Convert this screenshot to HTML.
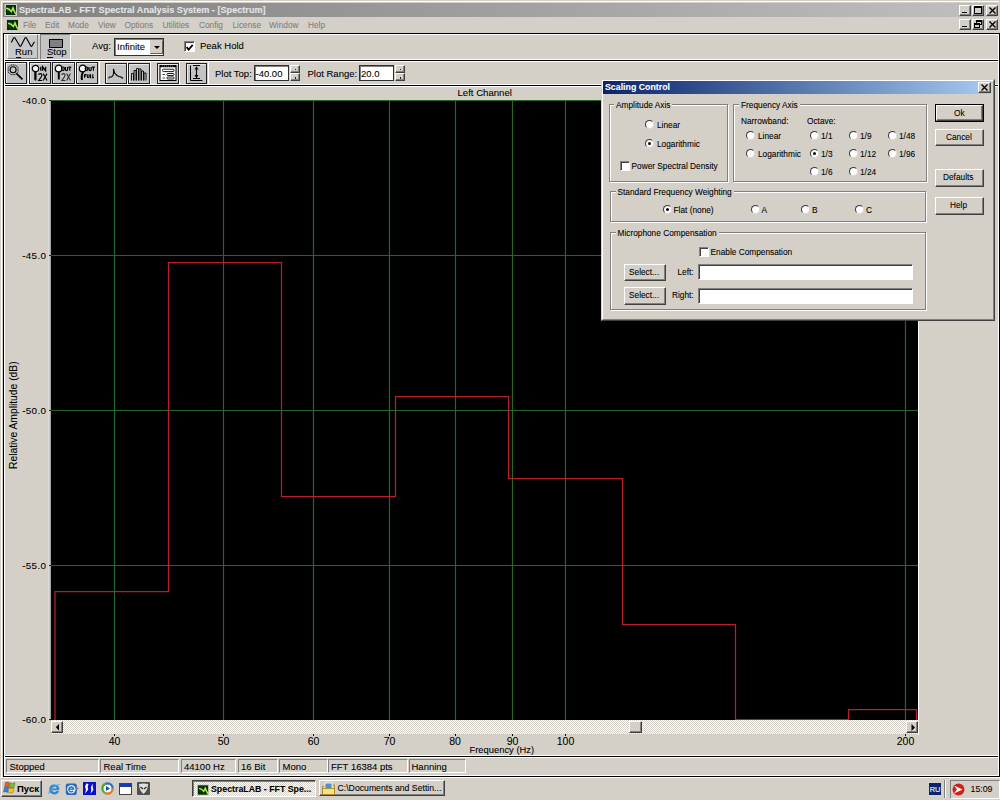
<!DOCTYPE html>
<html><head><meta charset="utf-8"><style>
*{box-sizing:border-box}
body{margin:0;width:1000px;height:800px;overflow:hidden;background:#D4D0C8;position:relative;font-family:"Liberation Sans",sans-serif;font-size:9px;color:#000}
.a{position:absolute}
.t{position:absolute;white-space:pre;line-height:1;-webkit-text-stroke:0.08px currentColor}
.glab{-webkit-text-stroke:0.08px #000}
.hl{position:absolute;background:#000}
.btn{position:absolute;background:#D4D0C8;border:1px solid;border-color:#fff #404040 #404040 #fff;box-shadow:inset -1px -1px 0 #808080}
.sunk{position:absolute;background:#fff;border:1px solid;border-color:#808080 #fff #fff #808080;box-shadow:inset 1px 1px 0 #404040}
.tb{position:absolute;background:#C4C4C4;border:1px solid #202020;box-shadow:inset 1px 1px 0 #e8e8e8}
.cap{position:absolute;width:12px;height:11px;background:#D4D0C8;border:1px solid;border-color:#fff #404040 #404040 #fff;box-shadow:inset -1px -1px 0 #808080}
.rad{position:absolute;width:9px;height:9px;border-radius:50%;background:#fff;border:1.2px solid;border-color:#383838 #d8d8d8 #d8d8d8 #383838;transform:rotate(0deg)}
.rad.on::after{content:"";position:absolute;left:1.8px;top:1.8px;width:3.4px;height:3.4px;border-radius:50%;background:#000}
.chk{position:absolute;width:10px;height:10px;background:#fff;border:1px solid;border-color:#808080 #fff #fff #808080;box-shadow:inset 1px 1px 0 #404040}
.grp{position:absolute;border:1px solid #808080;box-shadow:1px 1px 0 #fff, inset 1px 1px 0 #fff}
.glab{position:absolute;background:#D4D0C8;padding:0 2px;white-space:pre;line-height:1;font-size:8.3px;transform:scaleY(1.15);transform-origin:0 7px}

.mn{top:21px;font-size:8.3px;color:#808080}
.tb.dn{border-color:#404040 #fff #fff #404040;box-shadow:inset 1px 1px 0 #808080}
.yl{left:20px;font-size:9.9px;width:26.4px;text-align:right;letter-spacing:0.35px}
.xl{top:736px;font-size:10.5px;transform:translateX(-50%)}
.sp{position:absolute;top:759px;height:14px;border:1px solid;border-color:#808080 #fff #fff #808080}
.st{top:762px;font-size:9.5px}
.dt{font-size:8.3px;transform:scaleY(1.15);transform-origin:0 7px}
</style></head><body>

<!-- ============ MAIN FRAME ============ -->
<div class="a" style="left:1px;top:1px;width:998px;height:1px;background:#fff"></div>
<div class="a" style="left:1px;top:1px;width:1px;height:776px;background:#fff"></div>
<div class="a" style="left:3px;top:3px;width:994px;height:14px;background:linear-gradient(90deg,#808080,#C0C0C0)"></div>
<svg class="a" style="left:4px;top:4px" width="13" height="12" viewBox="0 0 13 12">
  <rect x="0.5" y="0" width="12.5" height="12" fill="#C8D0C8"/>
  <rect x="2" y="1" width="10" height="10" fill="#032a06"/>
  <path d="M1 4H12M1 7H12M4 1V11M8 1V11" stroke="#0a5a10" stroke-width="0.6"/>
  <path d="M2.2 4.3L5 5.2L7.3 7.5L9 4L9.8 6.2L12 10.5" stroke="#b8e848" stroke-width="1.5" fill="none"/><path d="M8 5.5L9.2 3.5L10.2 7Z" fill="#b8e848"/>
</svg>
<div class="t" style="left:19px;top:6px;font-size:9.15px;font-weight:bold;color:#E6E6E6">SpectraLAB - FFT Spectral Analysis System - [Spectrum]</div>
<div class="cap" style="left:959px;top:5px"><div class="a" style="left:2px;top:5.5px;width:5px;height:1.5px;background:#000"></div></div>
<div class="cap" style="left:972px;top:5px"><div class="a" style="left:1px;top:0px;width:8px;height:7.5px;border:1px solid #000;border-top-width:2px"></div></div>
<div class="cap" style="left:986px;top:5px"><svg class="a" style="left:2px;top:1px" width="7" height="7"><path d="M0.5 0.5L6.5 6.5M6.5 0.5L0.5 6.5" stroke="#000" stroke-width="1.4"/></svg></div>

<!-- menu bar -->
<svg class="a" style="left:6px;top:19px" width="13" height="12" viewBox="0 0 13 12">
  <rect x="0" y="0" width="13" height="12" fill="#C8C8C0"/>
  <rect x="1" y="1" width="11" height="10" fill="#032a06"/>
  <path d="M1 4H12M1 7H12M4 1V11M8 1V11" stroke="#0a5a10" stroke-width="0.6"/>
  <path d="M2.2 4.3L5 5.2L7.3 7.5L9 4L9.8 6.2L12 10.5" stroke="#b8e848" stroke-width="1.5" fill="none"/><path d="M8 5.5L9.2 3.5L10.2 7Z" fill="#b8e848"/>
</svg>
<div class="t mn" style="left:23px">File</div>
<div class="t mn" style="left:45px">Edit</div>
<div class="t mn" style="left:68px">Mode</div>
<div class="t mn" style="left:98px">View</div>
<div class="t mn" style="left:124.5px">Options</div>
<div class="t mn" style="left:162.5px">Utilities</div>
<div class="t mn" style="left:199px">Config</div>
<div class="t mn" style="left:232.5px">License</div>
<div class="t mn" style="left:269px">Window</div>
<div class="t mn" style="left:308px">Help</div>
<div class="cap" style="left:959px;top:19px"><div class="a" style="left:2px;top:5.5px;width:5px;height:1.5px;background:#000"></div></div>
<div class="cap" style="left:972px;top:19px">
  <div class="a" style="left:3px;top:0px;width:6px;height:5px;border:1px solid #000;border-top-width:2px"></div>
  <div class="a" style="left:1px;top:3px;width:6px;height:5px;border:1px solid #000;border-top-width:2px;background:#D4D0C8"></div>
</div>
<div class="cap" style="left:986px;top:19px"><svg class="a" style="left:2px;top:1px" width="7" height="7"><path d="M0.5 0.5L6.5 6.5M6.5 0.5L0.5 6.5" stroke="#000" stroke-width="1.4"/></svg></div>

<!-- ============ band lines ============ -->
<div class="hl" style="left:3px;top:33px;width:997px;height:1px"></div>
<div class="a" style="left:4px;top:34px;width:996px;height:1px;background:#fff"></div>
<div class="hl" style="left:3px;top:60px;width:997px;height:1px"></div>
<div class="a" style="left:4px;top:61px;width:996px;height:1px;background:#fff"></div>
<div class="hl" style="left:3px;top:85px;width:997px;height:1px"></div>
<div class="a" style="left:4px;top:86px;width:996px;height:1px;background:#fff"></div>
<div class="hl" style="left:3px;top:756px;width:997px;height:1px"></div>
<div class="a" style="left:4px;top:757px;width:996px;height:1px;background:#fff"></div>
<div class="hl" style="left:3px;top:776px;width:997px;height:1px"></div>
<div class="hl" style="left:3px;top:33px;width:1px;height:744px"></div>
<div class="a" style="left:4px;top:34px;width:1px;height:742px;background:#fff"></div>
<div class="a" style="left:998px;top:34px;width:1px;height:742px;background:#fff"></div>
<div class="hl" style="left:999px;top:33px;width:1px;height:744px"></div>
<div class="a" style="left:4px;top:59px;width:995px;height:1px;background:#fff"></div>
<div class="a" style="left:4px;top:84px;width:995px;height:1px;background:#fff"></div>
<div class="a" style="left:4px;top:755px;width:995px;height:1px;background:#fff"></div>
<div class="a" style="left:4px;top:775px;width:995px;height:1px;background:#fff"></div>

<!-- ============ TOOLBAR 1 ============ -->
<div class="a" style="left:7px;top:34px;width:31px;height:25px;background:#C8C8C8;border:1px solid;border-color:#fff #808080 #808080 #fff"></div>
<svg class="a" style="left:11px;top:36px" width="25" height="12"><path d="M0.3 6.4L2.6 2Q3.3 0.9 4 2L8.6 9.7Q9.3 10.9 10 9.7L14 2Q14.7 0.9 15.4 2L19.7 9.7Q20.4 10.9 21.1 9.7L23.4 5.8" stroke="#000" stroke-width="1.15" fill="none"/></svg>
<div class="t" style="left:15px;top:46.8px;font-size:9.5px">Run</div>
<div class="a" style="left:15.5px;top:56.5px;width:5px;height:1px;background:#000"></div>
<div class="a" style="left:40px;top:34px;width:31px;height:26px;background:#C4C4C4;border:1px solid;border-color:#808080 #fff #fff #808080"></div>
<div class="a" style="left:49px;top:39px;width:14px;height:9px;background:#808080;border:1px solid #000"></div>
<div class="t" style="left:47px;top:47.2px;font-size:9.5px">Stop</div>
<div class="a" style="left:47px;top:57.2px;width:5.5px;height:1px;background:#000"></div>

<div class="t" style="left:92px;top:41px;font-size:9.5px">Avg:</div>
<div class="a" style="left:114px;top:38px;width:50px;height:18px;background:#fff;border:1px solid #303030;box-shadow:inset 1px 1px 0 #808080"></div>
<div class="t" style="left:117px;top:42px;font-size:9.5px">Infinite</div>
<div class="a" style="left:150px;top:40px;width:13px;height:14px;background:#D4D0C8;border:1px solid;border-color:#D4D0C8 #606060 #606060 #D4D0C8"><svg class="a" style="left:3px;top:4.5px" width="6" height="3"><path d="M0 0H6L3 3Z" fill="#000"/></svg></div>
<div class="chk" style="left:184px;top:41px;width:11px;height:11px"><svg class="a" style="left:1px;top:1.5px" width="8" height="7"><path d="M0.6 3L2.6 5.6L6.8 0.8" stroke="#000" stroke-width="1.8" fill="none"/></svg></div>
<div class="t" style="left:200px;top:41px;font-size:9.5px">Peak Hold</div>

<!-- ============ TOOLBAR 2 ============ -->
<div class="a" style="left:4px;top:62px;width:1px;height:22px;background:#fff"></div>
<div class="tb" style="left:5px;top:62px;width:22px;height:22px"></div>
<div class="a" style="left:27.5px;top:62px;width:1px;height:22px;background:#fff"></div>
<div class="tb" style="left:29px;top:62px;width:22px;height:22px"></div>
<div class="a" style="left:51.5px;top:62px;width:1px;height:22px;background:#fff"></div>
<div class="tb" style="left:52px;top:62px;width:23px;height:22px"></div>
<div class="a" style="left:75px;top:62px;width:1px;height:22px;background:#fff"></div>
<div class="tb" style="left:76px;top:62px;width:22px;height:22px"></div>
<div class="a" style="left:98.5px;top:62px;width:1px;height:22px;background:#fff"></div>
<div class="tb" style="left:105px;top:63px;width:22px;height:21px"></div>
<div class="a" style="left:127px;top:62px;width:1px;height:22px;background:#fff"></div>
<div class="tb" style="left:128px;top:63px;width:22px;height:21px"></div>
<div class="a" style="left:150px;top:62px;width:1px;height:22px;background:#fff"></div>
<div class="tb" style="left:157px;top:63px;width:22px;height:21px"></div>
<div class="a" style="left:179px;top:62px;width:1px;height:22px;background:#fff"></div>
<div class="tb" style="left:186px;top:63px;width:21px;height:21px"></div>
<div class="a" style="left:207.5px;top:62px;width:1px;height:22px;background:#fff"></div>
<!-- icons -->
<svg class="a" style="left:3px;top:60px" width="26" height="26">
  <path d="M8 5L12.2 5L15 7.3V12.3L12.2 14.6H8L5.2 12.3V7.3Z" stroke="#000" stroke-width="0.9" fill="none" stroke-dasharray="1.2 0.6"/>
  <circle cx="10.1" cy="9.8" r="3" stroke="#000" stroke-width="1.1" fill="#C8C8C8"/>
  <path d="M13.3 13.3L19.5 19.3" stroke="#000" stroke-width="1.7"/>
</svg>
<svg class="a" style="left:29px;top:62px" width="22" height="22">
  <circle cx="6.5" cy="6.5" r="3.2" stroke="#000" stroke-width="1.2" fill="#f4f4f4"/>
  <path d="M6.4 10V17.5" stroke="#000" stroke-width="2.3"/><path d="M5.2 17.3L6.4 19L7.6 17.3Z" fill="#000"/>
  <path d="M11.8 4.8V8.8M13.6 8.8V4.8L16.6 8.8V4.8" stroke="#000" stroke-width="1.3" fill="none"/>
  <path d="M9.6 13Q9.8 11.6 11.3 11.6Q12.9 11.6 12.9 13.1Q12.9 14.6 9.6 18.5H13.2M14.2 11.6L18 18.5M18 11.6L14.2 18.5" stroke="#000" stroke-width="1.15" fill="none"/>
</svg>
<svg class="a" style="left:52px;top:62px" width="23" height="22">
  <circle cx="6.6" cy="6.5" r="3.3" stroke="#000" stroke-width="1.2" fill="#f4f4f4"/>
  <path d="M6.8 10V17.5" stroke="#000" stroke-width="2"/>
  <path d="M9.6 6.8Q9.6 5 11 5Q12.2 5 12.2 6.8Q12.2 8.6 11 8.6Q9.6 8.6 9.6 6.8ZM13.4 5V7.6Q13.4 8.6 14.5 8.6Q15.6 8.6 15.6 7.6V5M16.4 5.1H19.2M17.8 5V8.8" stroke="#000" stroke-width="1.2" fill="none"/>
  <path d="M9.8 13Q10 11.6 11.5 11.6Q13.1 11.6 13.1 13.1Q13.1 14.6 9.8 18.5H13.4M14.6 11.6L18.4 18.5M18.4 11.6L14.6 18.5" stroke="#303030" stroke-width="1.1" fill="none"/>
</svg>
<svg class="a" style="left:76px;top:62px" width="22" height="22">
  <circle cx="6.6" cy="6.5" r="3.3" stroke="#000" stroke-width="1.2" fill="#f4f4f4"/>
  <path d="M7.2 10Q5 13 6 18" stroke="#000" stroke-width="2" fill="none"/>
  <path d="M9.2 6.8Q9.2 5 10.6 5Q11.8 5 11.8 6.8Q11.8 8.6 10.6 8.6Q9.2 8.6 9.2 6.8ZM13 5V7.6Q13 8.6 14.1 8.6Q15.2 8.6 15.2 7.6V5M16 5.1H18.8M17.4 5V8.8" stroke="#000" stroke-width="1.2" fill="none"/>
  <path d="M8.5 12.5V15.8M8.5 12.6H10.3M8.5 14H10M11.3 12.3V14.8Q11.3 15.7 12.2 15.7Q13.1 15.7 13.1 14.8V12.3M14.5 12.3V15.7H15.5M16.8 12.3V15.7H18" stroke="#000" stroke-width="1.1" fill="none"/>
</svg>
<svg class="a" style="left:105px;top:62px" width="22" height="22">
  <path d="M3.5 16.5L4.5 15H6.5L8 13.5L8.5 11L8.5 7L9.5 11L12 13.5L14 14.5L16 15L18 16.5" stroke="#000" stroke-width="1.1" fill="none"/>
</svg>
<svg class="a" style="left:128px;top:62px" width="22" height="22">
  <path d="M3.5 18.5V11.5H5.5V18.5M6 18.5V8.5H8V18.5M8.5 18.5V6.5H10.5V18.5M11 18.5V7H13V18.5M13.5 18.5V9H15.5V18.5M16 18.5V11H18V18.5" stroke="#000" stroke-width="0.9" fill="none"/>
</svg>
<svg class="a" style="left:157px;top:62px" width="22" height="22">
  <rect x="3" y="3.5" width="16" height="15" fill="#fff" stroke="#000" stroke-width="1"/>
  <rect x="3" y="3" width="16" height="2.2" fill="#000"/>
  <path d="M5 4H17" stroke="#fff" stroke-width="0.5" stroke-dasharray="1 1"/>
  <rect x="5.5" y="7.2" width="11.5" height="2.4" rx="1" fill="#fff" stroke="#000" stroke-width="0.9"/>
  <rect x="10" y="11.5" width="7" height="2" rx="0.8" fill="#fff" stroke="#000" stroke-width="0.9"/>
  <rect x="10" y="15" width="7" height="2" rx="0.8" fill="#fff" stroke="#000" stroke-width="0.9"/>
  <path d="M5.5 12.5H8M5.5 16H8" stroke="#000" stroke-width="0.7"/>
</svg>
<svg class="a" style="left:186px;top:62px" width="22" height="22">
  <path d="M4.5 3.5V18.5H16.5" stroke="#000" stroke-width="1" fill="none"/>
  <path d="M7 3.5H14M7 16.5H14M10.5 5V16" stroke="#000" stroke-width="1.1"/>
  <path d="M8.5 7.5L10.5 4.2L12.5 7.5ZM8.5 13L10.5 16.3L12.5 13Z" fill="#000"/>
</svg>

<div class="t" style="left:215px;top:69px;font-size:9.5px">Plot Top:</div>
<div class="a" style="left:254px;top:65px;width:35px;height:16px;background:#fff;border:1px solid #303030;box-shadow:inset 1px 1px 0 #808080"></div>
<div class="t" style="left:255.5px;top:69px;font-size:9.5px">-40.00</div>
<div class="btn" style="left:290px;top:65px;width:10px;height:8px"><div class="a" style="left:3.5px;top:2.5px;width:1.5px;height:1.5px;background:#202020"></div></div>
<div class="btn" style="left:290px;top:73px;width:10px;height:8px"><div class="a" style="left:3.5px;top:3px;width:1.5px;height:1.5px;background:#202020"></div></div>
<div class="t" style="left:307.5px;top:69px;font-size:9.5px">Plot Range:</div>
<div class="a" style="left:359px;top:65px;width:35px;height:16px;background:#fff;border:1px solid #303030;box-shadow:inset 1px 1px 0 #808080"></div>
<div class="t" style="left:361px;top:69px;font-size:9.5px">20.0</div>
<div class="btn" style="left:395px;top:65px;width:10px;height:8px"><div class="a" style="left:3.5px;top:2.5px;width:1.5px;height:1.5px;background:#202020"></div></div>
<div class="btn" style="left:395px;top:73px;width:10px;height:8px"><div class="a" style="left:3.5px;top:3px;width:1.5px;height:1.5px;background:#202020"></div></div>
<!-- ============ PLOT ============ -->
<div class="t" style="left:457.5px;top:88px;font-size:9.6px">Left Channel</div>
<div class="t yl" style="top:96px">-40.0</div>
<div class="t yl" style="top:251px">-45.0</div>
<div class="t yl" style="top:406px">-50.0</div>
<div class="t yl" style="top:561px">-55.0</div>
<div class="t yl" style="top:715px">-60.0</div>
<div class="t" style="left:9px;top:469px;font-size:10.3px;transform:rotate(-90deg);transform-origin:0 0">Relative Amplitude (dB)</div>
<svg class="a" style="left:0;top:0" width="1000" height="800">
  <rect x="49" y="100" width="2" height="621" fill="#A8A8A8"/><rect x="48.5" y="100" width="1" height="621" fill="#e8e8e8"/><path d="M49 100.5H51M49 255.5H51M49 410.5H51M49 565.5H51M49 719.5H51" stroke="#202020" stroke-width="1.2"/>
  <rect x="51" y="101" width="867" height="619" fill="#000"/>
  <rect x="918" y="100" width="1" height="635" fill="#fff"/>
  <g stroke="#266626" stroke-width="1.2">
    <path d="M51 100.5H918M51 255.5H918M51 410.5H918M51 565.5H918"/>
    <path d="M114.5 101V720M223.5 101V720M313.5 101V720M389.5 101V720M455.5 101V720M512.5 101V720M565.5 101V720M905.5 101V720"/>
  </g>
  <path d="M55 720V591.5H168.5V262.5H281.5V496.5H395.5V396.5H508.5V478.5H622.5V624.5H735.5V719.5H848.5V709.5H916.5V720" stroke="#b82024" stroke-width="1.25" fill="none"/>
  <!-- scrollbar -->
  <defs><pattern id="chk" width="2" height="2" patternUnits="userSpaceOnUse"><rect width="2" height="2" fill="#fff"/><rect width="1" height="1" fill="#D4D0C8"/><rect x="1" y="1" width="1" height="1" fill="#D4D0C8"/></pattern></defs>
  <rect x="51" y="720" width="867" height="14" fill="url(#chk)"/>
  <g stroke="#000" stroke-width="1">
    <path d="M114.5 734V736M223.5 734V736M313.5 734V736M389.5 734V736M455.5 734V736M512.5 734V736M565.5 734V736M905.5 734V736"/>
  </g>
</svg>
<div class="btn" style="left:51px;top:720.5px;width:12px;height:12.5px"><svg class="a" style="left:3px;top:2px" width="5" height="7"><path d="M4 0V6.5L0.8 3.2Z" fill="#000"/></svg></div>
<div class="btn" style="left:629px;top:721px;width:13px;height:12px"></div>
<div class="btn" style="left:906px;top:721px;width:12px;height:12px"><svg class="a" style="left:4px;top:2px" width="5" height="7"><path d="M0.5 0V7L4 3.5Z" fill="#000"/></svg></div>
<div class="t xl" style="left:114.5px">40</div>
<div class="t xl" style="left:223.5px">50</div>
<div class="t xl" style="left:313.5px">60</div>
<div class="t xl" style="left:389.5px">70</div>
<div class="t xl" style="left:455px">80</div>
<div class="t xl" style="left:512.5px">90</div>
<div class="t xl" style="left:565.5px">100</div>
<div class="t xl" style="left:905.5px">200</div>
<div class="t" style="left:469.5px;top:745px;font-size:9.4px">Frequency (Hz)</div>

<!-- ============ STATUS BAR ============ -->
<div class="sp" style="left:6px;width:93px"></div>
<div class="sp" style="left:100px;width:79px"></div>
<div class="sp" style="left:181px;width:55px"></div>
<div class="sp" style="left:238px;width:40px"></div>
<div class="sp" style="left:279px;width:49px"></div>
<div class="sp" style="left:328px;width:80px"></div>
<div class="sp" style="left:409px;width:57px"></div>
<div class="t st" style="left:9.5px">Stopped</div>
<div class="t st" style="left:103.5px">Real Time</div>
<div class="t st" style="left:184px">44100 Hz</div>
<div class="t st" style="left:241px">16 Bit</div>
<div class="t st" style="left:282.5px">Mono</div>
<div class="t st" style="left:331px">FFT 16384 pts</div>
<div class="t st" style="left:411.5px">Hanning</div>
<!-- ============ TASKBAR ============ -->
<div class="a" style="left:0;top:777px;width:1000px;height:23px;background:#D4D0C8;border-top:1px solid #fff"></div>
<div class="btn" style="left:1px;top:780px;width:41px;height:17px"></div>
<svg class="a" style="left:3px;top:781px" width="13" height="14" viewBox="0 0 13 14">
  <path d="M2.5 1.5Q4.5 0.5 6.5 1.8L5.6 6.3Q3.6 5 1.6 6Z" fill="#f05a28" stroke="#603020" stroke-width="0.4"/>
  <path d="M7 1.9Q9.2 3.2 12 1.8L11.1 6.3Q8.5 7.6 6.1 6.4Z" fill="#7cbc2a" stroke="#305020" stroke-width="0.4"/>
  <path d="M1.5 6.5Q3.5 5.5 5.5 6.8L4.6 11.4Q2.6 10.1 0.6 11.1Z" fill="#2a8ae0" stroke="#203060" stroke-width="0.4"/>
  <path d="M6 6.9Q8.4 8.2 11 6.8L10.1 11.3Q7.5 12.6 5.1 11.4Z" fill="#fcc418" stroke="#605020" stroke-width="0.4"/>
</svg>
<div class="t" style="left:17px;top:783.5px;font-size:9.5px;font-weight:bold">Пуск</div>
<!-- quick launch -->
<svg class="a" style="left:47px;top:782px" width="14" height="14" viewBox="0 0 14 14">
  <path d="M7.5 2.5A5 5 0 1 0 12 9H9.5A2.6 2.6 0 0 1 5 8.2H12.3Q12.6 2.5 7.5 2.5ZM5 6.4Q5.5 4.6 7.4 4.6Q9.4 4.6 9.8 6.4Z" fill="#2a8ad8" fill-rule="evenodd"/>
  <path d="M1.5 12Q1 10 5 6.5Q10 2 13 2.5" stroke="#5ab0f0" stroke-width="1" fill="none"/>
</svg>
<svg class="a" style="left:65px;top:782px" width="14" height="14" viewBox="0 0 14 14">
  <rect x="0.8" y="1.5" width="11" height="11.5" rx="2" fill="#2a68b8"/>
  <circle cx="6.3" cy="7.2" r="4.2" fill="#d8f0ff"/>
  <path d="M3.8 7.2H8.6A2.4 2.4 0 1 0 8 9" stroke="#2a68b8" stroke-width="1.3" fill="none"/>
  <circle cx="12.5" cy="6.5" r="1" fill="#d07030"/>
</svg>
<svg class="a" style="left:83px;top:782px" width="13" height="13" viewBox="0 0 13 13">
  <rect x="0" y="0" width="13" height="13" fill="#0a10c8"/>
  <path d="M3.5 1.5Q1 5 3 7L2.2 11.5L5.2 7.5Q4 5 5.5 2Z" fill="#fff"/>
  <path d="M9.5 1.5L7.8 5.5Q9 8 7.5 11.5Q11.5 8 10 6Z" fill="#e8e8f8"/>
</svg>
<svg class="a" style="left:101px;top:782px" width="13" height="13" viewBox="0 0 13 13">
  <circle cx="6.5" cy="6.5" r="5.2" fill="none" stroke="#e87818" stroke-width="2.2" stroke-dasharray="11 22"/>
  <circle cx="6.5" cy="6.5" r="5.2" fill="none" stroke="#50a830" stroke-width="2.2" stroke-dasharray="0 11 11 11"/>
  <circle cx="6.5" cy="6.5" r="5.2" fill="none" stroke="#2870c8" stroke-width="2.2" stroke-dasharray="0 22 11 0"/>
  <circle cx="6.5" cy="6.5" r="3.6" fill="#fff"/>
  <path d="M5 4L9 6.5L5 9Z" fill="#1850a0"/>
</svg>
<svg class="a" style="left:119px;top:783px" width="13" height="12" viewBox="0 0 13 12">
  <rect x="0.5" y="0.5" width="12" height="11" fill="#fff" stroke="#404040"/>
  <rect x="1" y="1" width="11" height="3" fill="#1a3ab0"/>
</svg>
<svg class="a" style="left:137px;top:782px" width="13" height="13" viewBox="0 0 13 13">
  <rect x="0" y="0" width="13" height="13" rx="1" fill="#505050"/>
  <path d="M2 2Q6.5 1 11 2Q11 8 6.5 12Q2 8 2 2Z" fill="#e0e0e0"/>
  <path d="M3.5 5L6 7M9.5 5L7 7" stroke="#303030" stroke-width="1.3"/>
</svg>
<!-- task buttons -->
<div class="a" style="left:192px;top:780px;width:124px;height:17px;border:1px solid;border-color:#404040 #fff #fff #404040;box-shadow:inset 1px 1px 0 #808080"></div>
<svg class="a" style="left:193px;top:781px" width="122" height="15"><defs><pattern id="chk2" width="2" height="2" patternUnits="userSpaceOnUse"><rect width="2" height="2" fill="#fff"/><rect width="1" height="1" fill="#D4D0C8"/><rect x="1" y="1" width="1" height="1" fill="#D4D0C8"/></pattern></defs><rect x="1" y="1" width="121" height="17" fill="url(#chk2)"/></svg>
<svg class="a" style="left:197px;top:784px" width="12" height="12" viewBox="0 0 13 12">
  <rect x="0" y="0" width="13" height="12" fill="#C8C8C0"/>
  <rect x="1" y="1" width="11" height="10" fill="#032a06"/>
  <path d="M1 4H12M1 7H12M4 1V11M8 1V11" stroke="#0a5a10" stroke-width="0.6"/>
  <path d="M2.2 4.3L5 5.2L7.3 7.5L9 4L9.8 6.2L12 10.5" stroke="#b8e848" stroke-width="1.5" fill="none"/><path d="M8 5.5L9.2 3.5L10.2 7Z" fill="#b8e848"/>
</svg>
<div class="t" style="left:211px;top:785px;font-size:8.8px;font-weight:bold">SpectraLAB - FFT Spe...</div>
<div class="btn" style="left:319px;top:780px;width:126px;height:16px"></div>
<svg class="a" style="left:322px;top:782px" width="13" height="13" viewBox="0 0 13 13">
  <path d="M0.5 4.5H4L5 3H12.5V12.5H0.5Z" fill="#f0d070" stroke="#a08020" stroke-width="0.8"/>
  <rect x="3" y="1" width="7" height="6" fill="#5090d0" stroke="#fff" stroke-width="0.8"/>
  <path d="M0.5 6.5H12.5V12.5H0.5Z" fill="#f8e090" stroke="#a08020" stroke-width="0.8"/>
</svg>
<div class="t" style="left:337.5px;top:784px;font-size:8.7px">C:\Documents and Settin...</div>
<!-- tray -->
<div class="a" style="left:929px;top:783px;width:12px;height:12px;background:#0A246A"></div>
<div class="t" style="left:929px;top:785.5px;width:12px;text-align:center;font-size:7.4px;color:#fff;letter-spacing:-0.2px">RU</div>
<div class="a" style="left:944px;top:780px;width:1px;height:18px;background:#808080"></div>
<div class="a" style="left:945px;top:780px;width:1px;height:18px;background:#fff"></div>
<div class="a" style="left:950px;top:780px;width:50px;height:19px;border:1px solid;border-color:#808080 #fff #fff #808080"></div>
<svg class="a" style="left:952px;top:783px" width="13" height="13" viewBox="0 0 13 13">
  <circle cx="6.5" cy="6.5" r="6" fill="#d02020"/>
  <path d="M2 2.5L10.5 6.5L2 10.5L5 6.5Z" fill="#fff"/>
</svg>
<div class="t" style="left:970.5px;top:785px;font-size:8.8px">15:09</div>

<!-- ============ DIALOG ============ -->
<div class="a" style="left:601px;top:79px;width:394px;height:242px;background:#D4D0C8;border:1px solid;border-color:#D4D0C8 #404040 #404040 #D4D0C8"></div>
<div class="a" style="left:602px;top:80px;width:392px;height:240px;border:1px solid;border-color:#fff #808080 #808080 #fff"></div>
<div class="a" style="left:603px;top:81px;width:388px;height:13px;background:linear-gradient(90deg,#0A246A,#A6CAF0)"></div>
<div class="t" style="left:605px;top:83px;font-size:8.8px;font-weight:bold;color:#fff">Scaling Control</div>
<div class="cap" style="left:977.5px;top:82px;width:13px;height:11px"><svg class="a" style="left:2px;top:1px" width="7" height="7"><path d="M0.5 0.5L6.5 6.5M6.5 0.5L0.5 6.5" stroke="#000" stroke-width="1.4"/></svg></div>

<!-- groups -->
<div class="grp" style="left:609px;top:104px;width:119px;height:78px"></div>
<div class="glab" style="left:614px;top:101px">Amplitude Axis</div>
<div class="rad" style="left:645px;top:120px"></div><div class="t dt" style="left:657px;top:121px">Linear</div>
<div class="rad on" style="left:645px;top:139px"></div><div class="t dt" style="left:657px;top:140px">Logarithmic</div>
<div class="chk" style="left:619.5px;top:161px"></div><div class="t dt" style="left:631.5px;top:162px">Power Spectral Density</div>

<div class="grp" style="left:733px;top:104px;width:194px;height:78px"></div>
<div class="glab" style="left:739px;top:101px">Frequency Axis</div>
<div class="t dt" style="left:741px;top:117px">Narrowband:</div>
<div class="t dt" style="left:807px;top:117px">Octave:</div>
<div class="rad" style="left:746px;top:131px"></div><div class="t dt" style="left:758px;top:132px">Linear</div>
<div class="rad" style="left:746px;top:149px"></div><div class="t dt" style="left:758px;top:150px">Logarithmic</div>
<div class="rad" style="left:810px;top:131px"></div><div class="t dt" style="left:821px;top:132px">1/1</div>
<div class="rad on" style="left:810px;top:149px"></div><div class="t dt" style="left:821px;top:150px">1/3</div>
<div class="rad" style="left:810px;top:167px"></div><div class="t dt" style="left:821px;top:168px">1/6</div>
<div class="rad" style="left:849px;top:131px"></div><div class="t dt" style="left:860px;top:132px">1/9</div>
<div class="rad" style="left:849px;top:149px"></div><div class="t dt" style="left:860px;top:150px">1/12</div>
<div class="rad" style="left:849px;top:167px"></div><div class="t dt" style="left:860px;top:168px">1/24</div>
<div class="rad" style="left:888px;top:131px"></div><div class="t dt" style="left:899px;top:132px">1/48</div>
<div class="rad" style="left:888px;top:149px"></div><div class="t dt" style="left:899px;top:150px">1/96</div>

<div class="grp" style="left:610px;top:191px;width:316px;height:31px"></div>
<div class="glab" style="left:615.5px;top:188px">Standard Frequency Weighting</div>
<div class="rad on" style="left:663px;top:205px"></div><div class="t dt" style="left:673.5px;top:206px">Flat (none)</div>
<div class="rad" style="left:751px;top:205px"></div><div class="t dt" style="left:761.5px;top:206px">A</div>
<div class="rad" style="left:801px;top:205px"></div><div class="t dt" style="left:812px;top:206px">B</div>
<div class="rad" style="left:855px;top:205px"></div><div class="t dt" style="left:866px;top:206px">C</div>

<div class="grp" style="left:610px;top:232px;width:316px;height:78px"></div>
<div class="glab" style="left:615.5px;top:228.8px">Microphone Compensation</div>
<div class="chk" style="left:698.5px;top:246.5px"></div><div class="t dt" style="left:710.5px;top:248px">Enable Compensation</div>
<div class="btn" style="left:624px;top:264px;width:42px;height:17px"></div><div class="t dt" style="left:629px;top:268px">Select...</div>
<div class="t dt" style="left:677.5px;top:268px">Left:</div>
<div class="sunk" style="left:698px;top:264px;width:215px;height:16px"></div>
<div class="btn" style="left:624px;top:287px;width:42px;height:18px"></div><div class="t dt" style="left:629px;top:291px">Select...</div>
<div class="t dt" style="left:672px;top:291px">Right:</div>
<div class="sunk" style="left:698px;top:288px;width:215px;height:16px"></div>

<!-- buttons -->
<div class="a" style="left:935px;top:104px;width:49px;height:18px;border:1px solid #000"></div>
<div class="btn" style="left:936px;top:105px;width:47px;height:16px"></div><div class="t dt" style="left:954px;top:108.5px">Ok</div>
<div class="btn" style="left:935px;top:129px;width:49px;height:17px"></div><div class="t dt" style="left:946px;top:132.5px">Cancel</div>
<div class="btn" style="left:935px;top:169px;width:49px;height:18px"></div><div class="t dt" style="left:943px;top:173px">Defaults</div>
<div class="btn" style="left:935px;top:197px;width:49px;height:18px"></div><div class="t dt" style="left:950px;top:201px">Help</div>

</body></html>
